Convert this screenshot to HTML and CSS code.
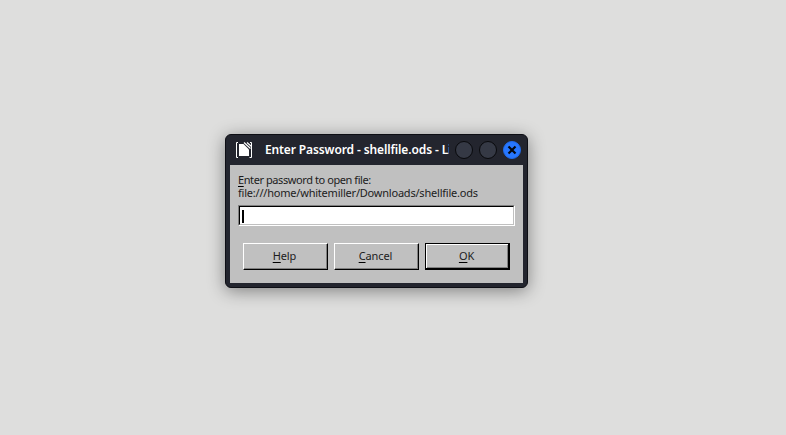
FILE: index.html
```
<!DOCTYPE html>
<html lang="en">
<head>
<meta charset="utf-8">
<title>Enter Password</title>
<link rel="stylesheet" href="styles.css">
</head>
<body>
<section class="dialog" role="dialog">
  <header class="titlebar">
    <svg class="app-icon" width="18" height="18" viewBox="0 0 18 18">
      <path d="M3 1.500H1.500v15H3M14.500 16.500H16.500V1.500H15" fill="none" stroke="#fff"/>
      <path d="M4 3h4.500l5.500 5.500V15H4z" fill="#fff"/>
      <path d="M9 1.500l6.500 6M12 1.500l4.500 4" fill="none" stroke="#fff" stroke-width="1.200"/>
    </svg>
    <h1 class="title">Enter Password - shellfile.ods - LibreOffice</h1>
    <div class="controls">
      <span class="control"></span>
      <span class="control"></span>
      <span class="control close"><svg width="10" height="10" viewBox="0 0 10 10"><path d="M1.500 1.500l7 7M8.500 1.500l-7 7" stroke="#050810" stroke-width="2.200"/></svg></span>
    </div>
  </header>
  <main class="content">
    <p class="prompt"><span class="line enter"><span class="key">E</span>nter password to open file:</span><span class="line path">file:///home/whitemiller/Downloads/shellfile.ods</span></p>
    <div class="field"><div class="field-inner"><span class="caret"></span></div></div>
    <div class="buttons">
      <button class="button"><span class="label"><span class="key">H</span>elp</span></button>
      <button class="button"><span class="label"><span class="key">C</span>ancel</span></button>
      <button class="button default"><span class="label"><span class="key">O</span>K</span></button>
    </div>
  </main>
</section>
</body>
</html>
```
FILE: styles.css
```
* { box-sizing: border-box; }
body {
  margin: 0;
  height: 435px;
  overflow: hidden;
  background: #dededd;
  font-family: "Noto Sans", sans-serif;
}
.dialog {
  width: 303px;
  height: 154px;
  margin: 134px 0 0 225px;
  padding: 0 4px 4px;
  border: 1px solid #0d0e14;
  border-radius: 6px;
  background: #23252e;
  box-shadow: 0 3px 17px rgba(0, 0, 0, .42);
}
.titlebar {
  display: flex;
  align-items: center;
  height: 30px;
  padding-left: 5px;
}
.app-icon { flex: none; }
.title {
  flex: none;
  width: 184px;
  margin: 0 6px 0 12px;
  overflow: hidden;
  white-space: nowrap;
  color: #fff;
  font-size: 12px;
  line-height: 18px;
  font-weight: 600;
  letter-spacing: -.12px;
}
.controls { display: flex; gap: 6px; }
.control {
  display: flex;
  align-items: center;
  justify-content: center;
  width: 18px;
  height: 18px;
  border: 1px solid #08090c;
  border-radius: 50%;
  background: #353945;
}
.close { border-color: #226be8; background: #2777ff; }
.content {
  height: 118px;
  padding: 8px 8px 0;
  background: #c0c0c0;
  color: #1c1c20;
  font-size: 11px;
}
.prompt { margin: 0; height: 32px; }
.line { display: block; height: 13px; line-height: 13px; white-space: nowrap; }
.enter { letter-spacing: -.42px; }
.path { letter-spacing: -.21px; }
.key { text-decoration: underline; text-decoration-color: #000; text-decoration-thickness: 1px; text-underline-offset: 2px; text-decoration-skip-ink: none; }
.field {
  width: 277px;
  height: 21px;
  border: 1px solid;
  border-color: #808080 #fff #fff #808080;
}
.field-inner {
  height: 19px;
  padding: 3px 2px;
  border: 1px solid;
  border-color: #000 #c0c0c0 #c0c0c0 #000;
  background: #fff;
}
.caret { display: block; width: 2px; height: 13px; background: #000; }
.buttons { display: flex; gap: 6px; padding: 17px 0 0 5px; }
.button {
  width: 85px;
  height: 27px;
  padding: 0 2px 2px 0;
  border: 1px solid;
  border-color: #fff #000 #000 #fff;
  border-radius: 0;
  background: #c0c0c0;
  box-shadow: inset -1px -1px #808080;
  color: #1c1c20;
  font: 11px/13px "Noto Sans", sans-serif;
}
.label { letter-spacing: -.1px; }
.default {
  border-color: #000;
  box-shadow: inset -1px -1px #000, inset 1px 1px #fff, inset -2px -2px #808080;
}
```
